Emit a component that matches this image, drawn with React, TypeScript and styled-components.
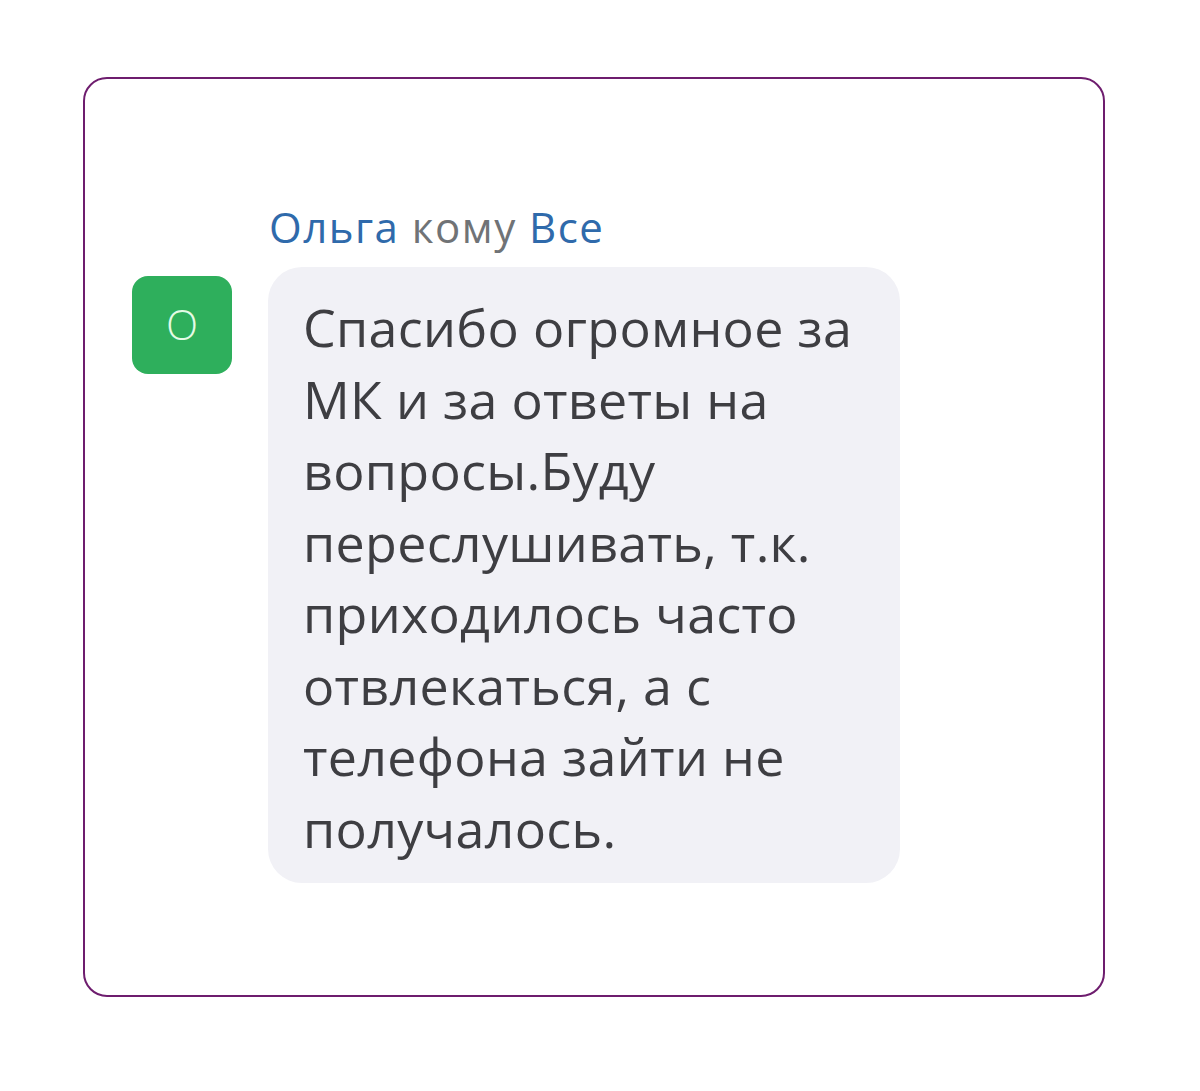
import React from "react";
import styled, { createGlobalStyle } from "styled-components";

const GlobalStyle = createGlobalStyle`
  html, body {
    margin: 0;
    padding: 0;
    background: #ffffff;
  }
  body {
    font-family: "Open Sans", "Noto Sans", sans-serif;
  }
`;

const Page = styled.div`
  width: 1200px;
  height: 1091px;
  box-sizing: border-box;
  padding: 77px 95px 0 83px;
`;

const Card = styled.div`
  box-sizing: border-box;
  width: 1022px;
  height: 920px;
  border: 2px solid #6e1d6e;
  border-radius: 24px;
  padding: 123px 0 0 47px;
`;

const MessageRow = styled.div`
  display: flex;
  align-items: flex-start;
  gap: 36px;
`;

const Avatar = styled.div`
  flex: none;
  width: 100px;
  height: 98px;
  margin-top: 74px;
  border-radius: 16px;
  background: #2eaf5c;
  color: #e4fbe6;
  display: flex;
  align-items: center;
  justify-content: center;
  font-size: 42px;
  font-weight: 300;
  padding-bottom: 4px;
  box-sizing: border-box;
`;

const Body = styled.div`
  display: flex;
  flex-direction: column;
  gap: 15px;
`;

const Header = styled.div`
  font-size: 42px;
  line-height: 50px;
  letter-spacing: 1.5px;
  padding-left: 1px;
  white-space: nowrap;
`;

const Name = styled.span<{ $muted?: boolean }>`
  color: ${(p) => (p.$muted ? "#707376" : "#2f6aab")};
`;

const Bubble = styled.div`
  width: 632px;
  box-sizing: border-box;
  background: #f1f1f6;
  border-radius: 34px;
  padding: 24px 20px 20px 35px;
  color: #3e3e42;
  font-size: 52px;
  line-height: 71.5px;
  letter-spacing: 0.3px;
`;

const Line = styled.div`
  white-space: nowrap;
`;

const lines = [
  "Спасибо огромное за",
  "МК и за ответы на",
  "вопросы.Буду",
  "переслушивать, т.к.",
  "приходилось часто",
  "отвлекаться, а с",
  "телефона зайти не",
  "получалось.",
];

export default function App() {
  return (
    <>
      <GlobalStyle />
      <Page>
        <Card>
          <MessageRow>
            <Avatar>О</Avatar>
            <Body>
              <Header>
                <Name>Ольга</Name> <Name $muted>кому</Name> <Name>Все</Name>
              </Header>
              <Bubble>
                {lines.map((l) => (
                  <Line key={l}>{l}</Line>
                ))}
              </Bubble>
            </Body>
          </MessageRow>
        </Card>
      </Page>
    </>
  );
}
